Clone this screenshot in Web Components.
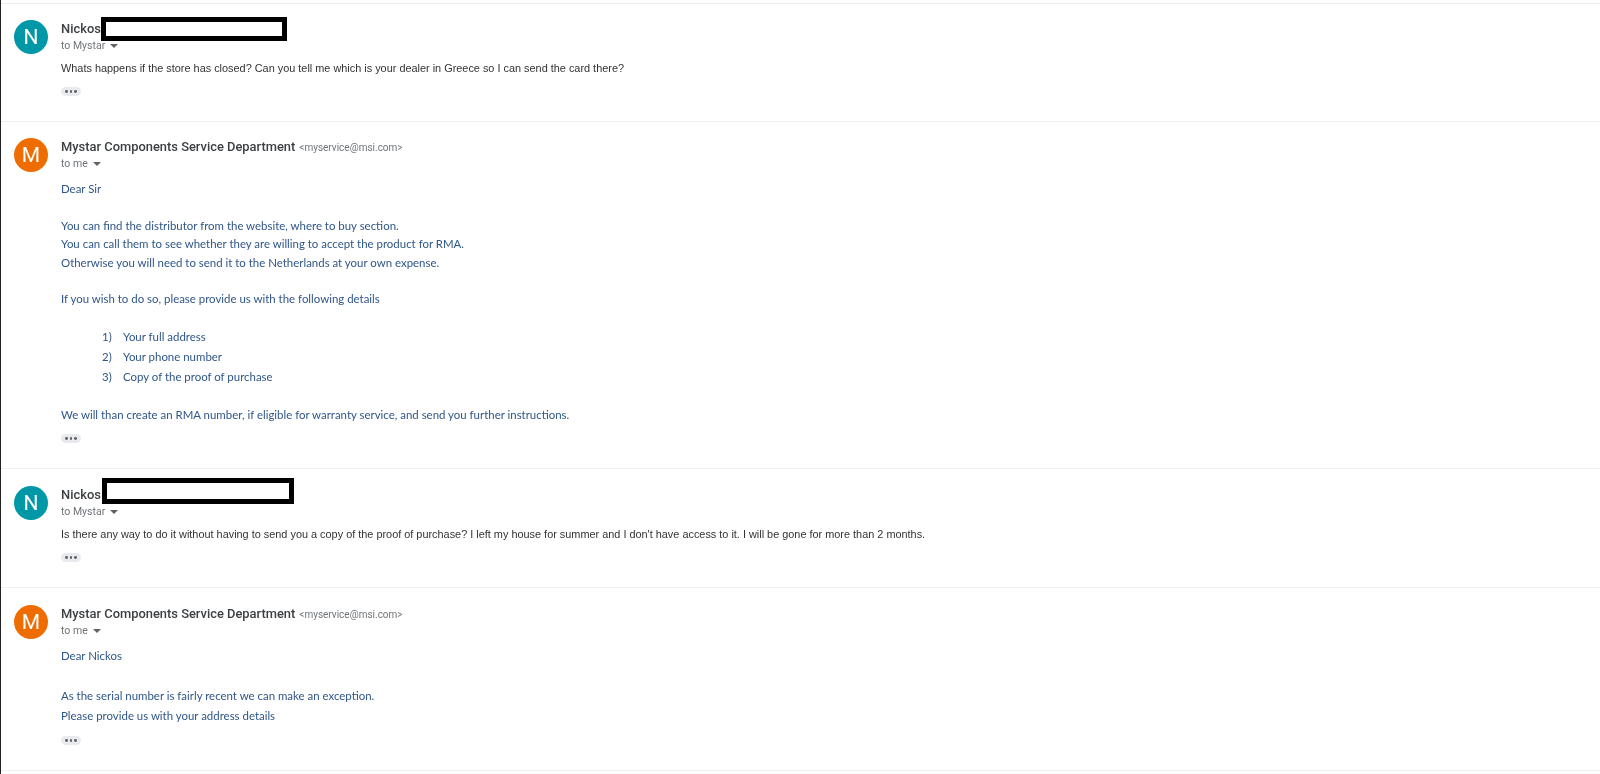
<!DOCTYPE html>
<html>
<head>
<meta charset="utf-8">
<title>Mail thread</title>
<style>
  html, body { margin: 0; padding: 0; background: #fff; }
  body { height: 774px; overflow: hidden; }
</style>
</head>
<body>
<mail-thread>
  <mail-message initial="N" color="#0097a7" name="Nickos" to="to Mystar" redact="40,12,186,24">
    <plain-body>Whats happens if the store has closed? Can you tell me which is your dealer in Greece so I can send the card there?</plain-body>
  </mail-message>

  <mail-message initial="M" color="#ef6c00" name="Mystar Components Service Department" email="&lt;myservice@msi.com&gt;" to="to me">
    <blue-body>
      <p>Dear Sir</p>
      <p class="gap"></p>
      <p>You can find the distributor from the website, where to buy section.</p>
      <p>You can call them to see whether they are willing to accept the product for RMA.</p>
      <p>Otherwise you will need to send it to the Netherlands at your own expense.</p>
      <p class="gap"></p>
      <p>If you wish to do so, please provide us with the following details</p>
      <p class="gap"></p>
      <p class="row item"><span>1)</span>Your full address</p>
      <p class="row item"><span>2)</span>Your phone number</p>
      <p class="row item"><span>3)</span>Copy of the proof of purchase</p>
      <p class="gap short"></p>
      <p>We will than create an RMA number, if eligible for warranty service, and send you further instructions.</p>
    </blue-body>
  </mail-message>

  <mail-message initial="N" color="#0097a7" name="Nickos" to="to Mystar" extra="1" redact="41,7,192,26">
    <plain-body>Is there any way to do it without having to send you a copy of the proof of purchase? I left my house for summer and I don't have access to it. I will be gone for more than 2 months.</plain-body>
  </mail-message>

  <mail-message initial="M" color="#ef6c00" name="Mystar Components Service Department" email="&lt;myservice@msi.com&gt;" to="to me" extra="1">
    <blue-body style="margin-top: 7px">
      <p class="row">Dear Nickos</p>
      <p class="row gap"></p>
      <p class="row">As the serial number is fairly recent we can make an exception.</p>
      <p class="row">Please provide us with your address details</p>
    </blue-body>
  </mail-message>
</mail-thread>

<script>
class MailThread extends HTMLElement {
  constructor(){
    super();
    this.attachShadow({mode: 'open'});
    this.shadowRoot.innerHTML = `
      <style>
        :host {
          display: block;
          height: 774px;
          box-sizing: border-box;
          padding-top: 3px;
          border-left: 1px solid #222;
          filter: blur(.35px);
        }
        .top { height: 1px; background: #eceff1; }
      </style>
      <div class="top"></div>
      <slot></slot>
    `;
  }
}

class MailMessage extends HTMLElement {
  constructor(){
    super();
    this.attachShadow({mode: 'open'});
  }

  connectedCallback(){
    const color = this.getAttribute("color");
    const email = this.getAttribute("email");
    const redact = this.getAttribute("redact");
    const extra = parseFloat(this.getAttribute("extra") || 0);
    let box = "";
    if(redact){
      const [left, top, width, height] = redact.split(",");
      box = `<div class="redact" style="left:${left}px;top:${top}px;width:${width}px;height:${height}px"></div>`;
    }
    this.shadowRoot.innerHTML = `
      <style>
        :host {
          display: block;
          border-bottom: 1px solid #eef0f2;
        }
        .wrap {
          display: flex;
          padding: ${17 + extra}px 0 25px 13px;
        }
        .avatar {
          flex: none;
          width: 34px;
          height: 34px;
          margin-top: -1.5px;
          border-radius: 50%;
          background: ${color};
          color: #fff;
          font: 400 21px "Roboto", sans-serif;
          display: flex;
          align-items: center;
          justify-content: center;
        }
        .main { margin-left: 13px; flex: 1; position: relative; }
        .from {
          height: 16px;
          display: flex;
          align-items: center;
          gap: 4px;
          font: 500 12.9px/16px "Roboto", sans-serif;
          color: #3c4043;
        }
        .email { font: 400 10px/16px "Roboto", sans-serif; color: #70757a; margin-top: 1px; }
        .to {
          height: 17px;
          display: flex;
          align-items: center;
          gap: 5px;
          font: 400 10.5px/17px "Roboto", sans-serif;
          color: #70757a;
        }
        .caret { width: 0; height: 0; border: 4px solid transparent; border-top: 4px solid #5f6368; border-bottom: 0; }
        .dots {
          width: 20px;
          height: 9px;
          margin-top: 10px;
          border-radius: 5px;
          background: #e8eaed;
          display: flex;
          align-items: center;
          justify-content: center;
          gap: 1.4px;
        }
        .dots i { width: 2.8px; height: 2.8px; border-radius: 50%; background: #5f6368; }
        .redact {
          position: absolute;
          box-sizing: border-box;
          border: 5px solid #000;
          background: #fff;
          margin-top: -16px;
        }
      </style>
      <div class="wrap">
        <div class="avatar">${this.getAttribute("initial")}</div>
        <div class="main">
          <div class="from">
            <span>${this.getAttribute("name")}</span>
            ${email ? `<span class="email">${email.replace("<", "&lt;")}</span>` : ""}
          </div>
          <div class="to">
            <span>${this.getAttribute("to")}</span>
            <span class="caret"></span>
          </div>
          <slot></slot>
          <div class="dots"><i></i><i></i><i></i></div>
          ${box}
        </div>
      </div>
    `;
  }
}

class PlainBody extends HTMLElement {
  constructor(){
    super();
    this.attachShadow({mode: 'open'});
    this.shadowRoot.innerHTML = `
      <style>
        :host {
          display: block;
          margin: 5px 0 1px;
          font: 400 10.9px/18px "Liberation Sans", Arial, sans-serif;
          color: #333;
        }
      </style>
      <slot></slot>
    `;
  }
}

class BlueBody extends HTMLElement {
  constructor(){
    super();
    this.attachShadow({mode: 'open'});
    this.shadowRoot.innerHTML = `
      <style>
        :host {
          display: block;
          margin-top: 8px;
          font: 400 11.45px/18.4px "Lato", sans-serif;
          color: #2f5688;
        }
        ::slotted(p) { margin: 0; height: 18.4px; }
        ::slotted(p.short) { height: 18.6px; }
        ::slotted(p.row) { height: 20px; line-height: 20px; }
        ::slotted(p.item) { padding-left: 41px; }
      </style>
      <slot></slot>
    `;
    // spans inside .item are out of reach for ::slotted
    this.querySelectorAll('.item span').forEach(span => {
      span.style.display = 'inline-block';
      span.style.width = '21px';
    });
  }
}

customElements.define('mail-thread', MailThread);
customElements.define('mail-message', MailMessage);
customElements.define('plain-body', PlainBody);
customElements.define('blue-body', BlueBody);
</script>
</body>
</html>
